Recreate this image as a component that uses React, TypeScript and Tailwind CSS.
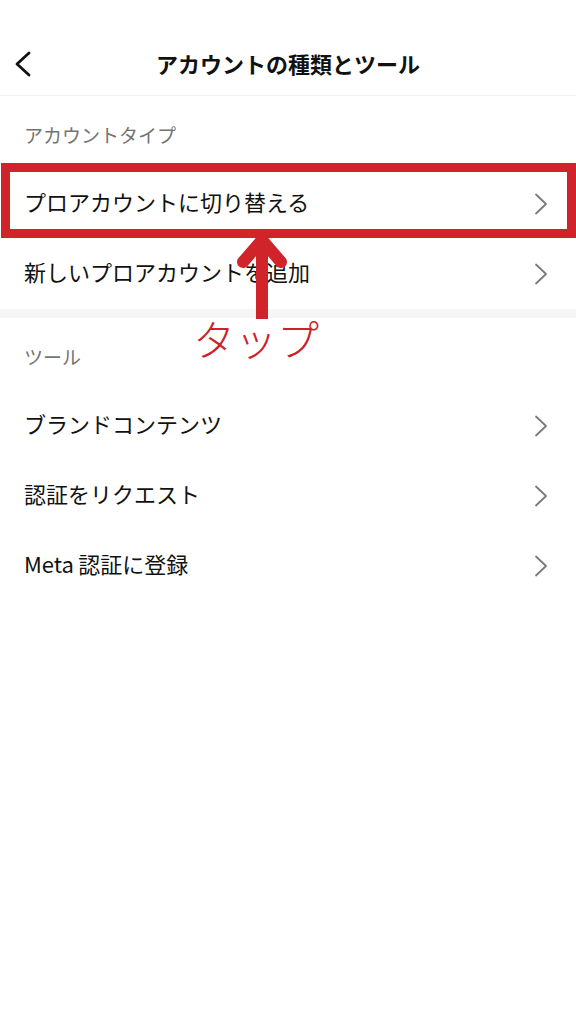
import React from "react";

const Chevron = () => (
  <svg width="14" height="22" viewBox="0 0 14 22" fill="none">
    <path d="M2 1.5 L12 11 L2 20.5" stroke="#7a7a7a" strokeWidth="1.8" strokeLinecap="round" strokeLinejoin="round" />
  </svg>
);

const Row = ({ label }: { label: string }) => (
  <div className="h-[70px] flex items-center justify-between pl-[24px] pr-[28px]">
    <span className="text-[22px] text-[#111] pb-[5px]">{label}</span>
    <Chevron />
  </div>
);

const SectionHeader = ({ label }: { label: string }) => (
  <div className="h-[73px] flex items-center pl-[24px] pt-[6px]">
    <span className="text-[19px] text-[#737373]">{label}</span>
  </div>
);

export default function App() {
  return (
    <div
      className="relative w-[576px] h-[1024px] bg-white overflow-hidden"
      style={{ fontFamily: '"Noto Sans CJK JP", "Noto Sans", sans-serif' }}
    >
      <div className="h-[96px] pt-[31px] grid grid-cols-[60px_1fr_60px] items-center border-b border-[#efefef]">
        <div className="flex items-center pl-[13px] pt-[2px]">
          <svg width="20" height="26" viewBox="0 0 20 26" fill="none">
            <path d="M16 2 L4 13 L16 24" stroke="#111" strokeWidth="2.8" strokeLinecap="round" strokeLinejoin="round" />
          </svg>
        </div>
        <div className="text-center text-[22px] font-semibold text-[#111]">アカウントの種類とツール</div>
        <div />
      </div>
      <SectionHeader label="アカウントタイプ" />
      <Row label="プロアカウントに切り替える" />
      <Row label="新しいプロアカウントを追加" />
      <div className="h-[9px] bg-[#f6f6f6]" />
      <SectionHeader label="ツール" />
      <Row label="ブランドコンテンツ" />
      <Row label="認証をリクエスト" />
      <Row label="Meta&#8201;認証に登録" />

      {/* annotation overlay */}
      <div className="absolute left-[1px] top-[163px] w-[575px] h-[75px] border-[9px] border-[#d0232a]" />
      <svg className="absolute left-[230px] top-[225px]" width="64" height="100" viewBox="0 0 64 100" fill="none">
        <rect x="26" y="16" width="12" height="78" fill="#d0232a" />
        <path d="M13 37 L32 15 L51 37" stroke="#d0232a" strokeWidth="12" strokeLinecap="round" strokeLinejoin="round" />
      </svg>
      <div className="absolute left-[193px] top-[317px] text-[42px] font-light leading-none text-[#cc2229]">タップ</div>
    </div>
  );
}
